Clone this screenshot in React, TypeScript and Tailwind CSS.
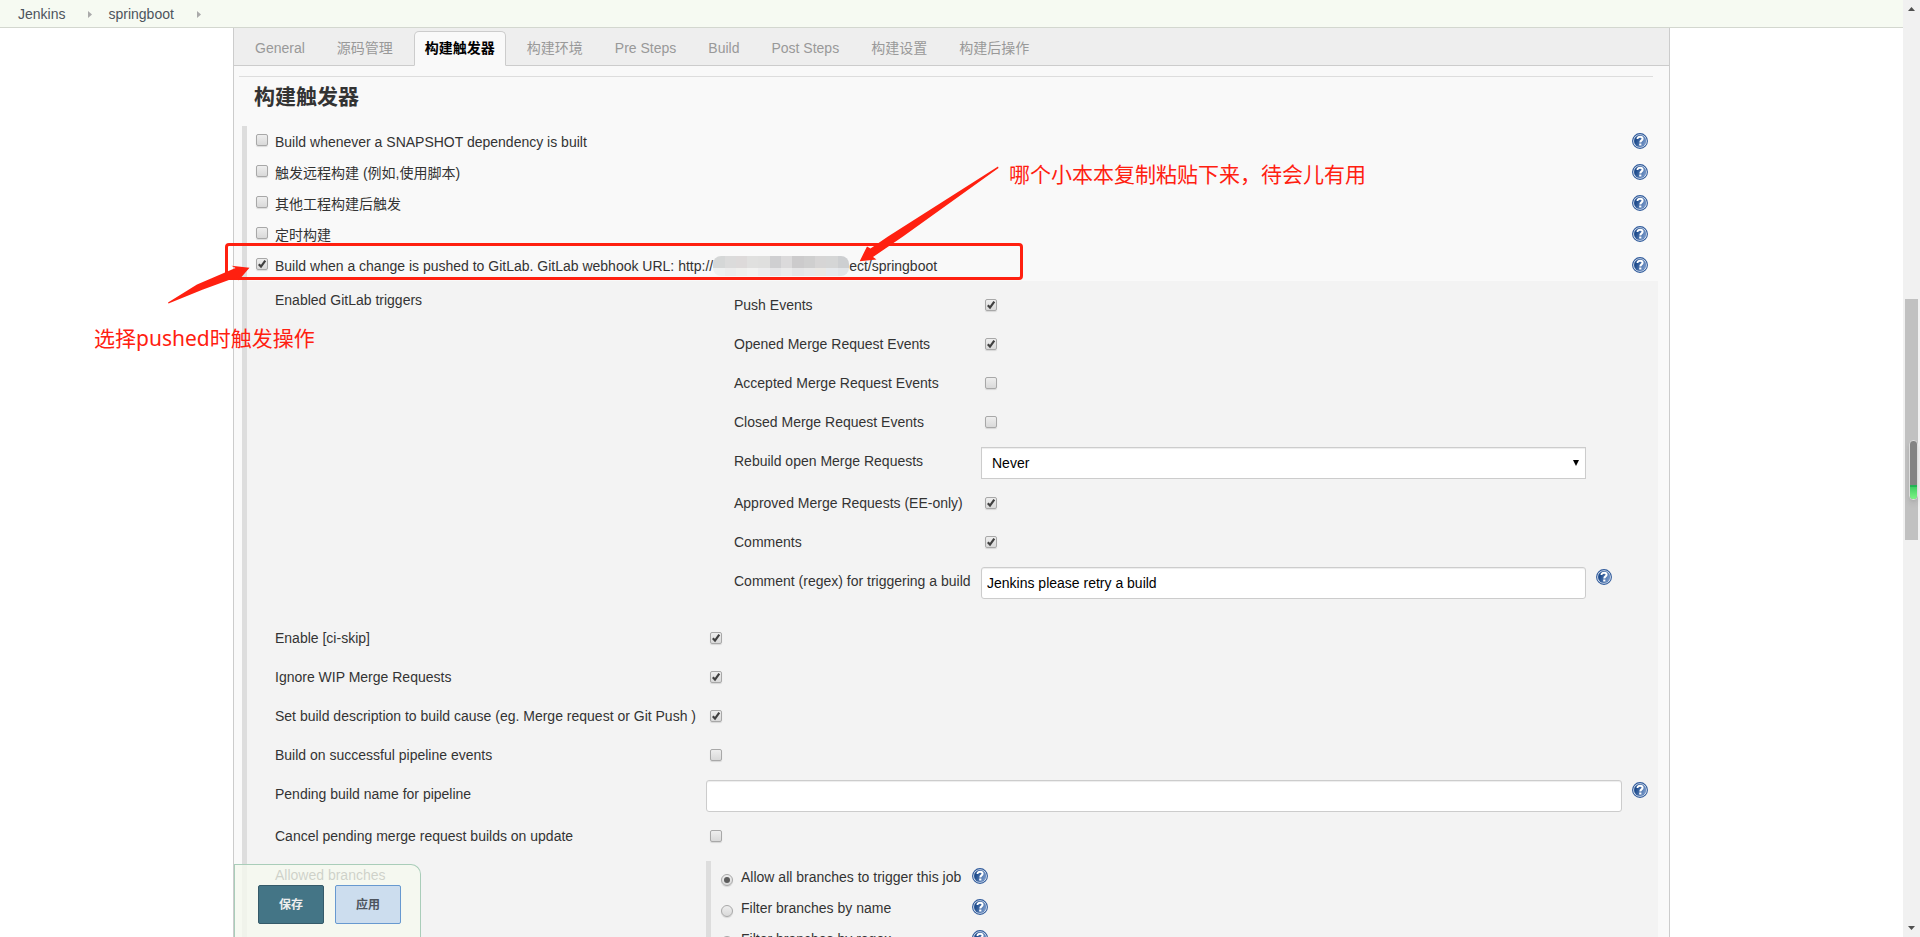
import { useId } from 'react';
import type { ReactNode } from 'react';

const tabs = ['General', '源码管理', '构建触发器', '构建环境', 'Pre Steps', 'Build', 'Post Steps', '构建设置', '构建后操作'];

const triggers = ['Build whenever a SNAPSHOT dependency is built', '触发远程构建 (例如,使用脚本)', '其他工程构建后触发', '定时构建'];

// Colours of the masked host name, top and bottom strip
const maskTop = ['#d5d7d7', '#dbdbdb', '#dddada', '#e0e0df', '#dfdfde', '#cfcfd1', '#dbdadb', '#cccbcc', '#cfcfcf', '#d6d5d5', '#d5d6d6', '#cdcfd1'];
const maskBottom = ['#eef0f0', '#ececec', '#efefed', '#f2f2f1', '#ededee', '#e6e6e8', '#ebebeb', '#e5e5e6', '#e8e8e8', '#eae8e4', '#e6e9ec', '#e2e5e8'];

function HelpIcon({ className = '' }: { className?: string }) {
  return (
    <a href="#help" aria-label="Help" className={`block size-4 shrink-0 ${className}`}>
      <svg viewBox="0 0 16 16" className="size-4">
        <defs>
          <linearGradient id="help-fill" x1="0" y1="0.3" x2="1" y2="0.7">
            <stop offset="0.2" stopColor="#204d8d" />
            <stop offset="1" stopColor="#7f9fcf" />
          </linearGradient>
        </defs>
        <circle cx="8" cy="8" r="7.400" fill="#fff" stroke="#2f5a9b" strokeWidth="1.100" />
        <circle cx="8" cy="8" r="6" fill="url(#help-fill)" stroke="#3d67a6" strokeWidth="0.400" />
        <path d="M5.500 6C5.500 4.300 6.600 3.800 8.100 3.800s2.500.7 2.500 2c0 1.700-2.300 1.500-2.300 3.700" fill="none" stroke="#fff" strokeWidth="2" />
        <rect x="7.200" y="10.500" width="2.200" height="2" fill="#fff" />
      </svg>
    </a>
  );
}

function Checkbox({ id, checked = false }: { id: string; checked?: boolean }) {
  return (
    <span className="relative block size-3 shrink-0">
      <input
        id={id}
        type="checkbox"
        defaultChecked={checked}
        className="peer block size-3 appearance-none rounded-xs border border-[#a8a8a8] bg-linear-to-b from-[#eeeeee] to-[#d9d9d9] shadow-[0_1px_1px_rgba(0,0,0,0.12)]"
      />
      <svg viewBox="0 0 12 12" className="pointer-events-none absolute inset-0 hidden size-3 peer-checked:block">
        <path d="M2.8 6.3l2.2 2.3 4.3-6" fill="none" stroke="#404040" strokeWidth="2.2" />
      </svg>
    </span>
  );
}

function Radio({ id, checked = false }: { id: string; checked?: boolean }) {
  return (
    <span className="relative block size-3 shrink-0">
      <input
        id={id}
        type="radio"
        name="branches"
        defaultChecked={checked}
        className="peer block size-3 appearance-none rounded-full border border-[#a8a8a8] bg-linear-to-b from-[#eeeeee] to-[#d9d9d9] shadow-[0_1px_1px_rgba(0,0,0,0.12)]"
      />
      <span className="pointer-events-none absolute inset-[3px] hidden rounded-full bg-[#5c5c5c] peer-checked:block" />
    </span>
  );
}

function TriggerRow({ children, checked }: { children: ReactNode; checked?: boolean }) {
  const id = useId();
  return (
    <div className="flex h-[31px] pr-[10px] pl-[9px]">
      <div className="pt-2">
        <Checkbox id={id} checked={checked} />
      </div>
      <label htmlFor={id} className="ml-[7px] flex-1 pt-[6px]">
        {children}
      </label>
      <HelpIcon className="mt-[7px]" />
    </div>
  );
}

type FieldProps = { label: string; nested?: boolean; help?: boolean; checked?: boolean; children?: (id: string) => ReactNode };

function Field({ label, nested, help, checked, children }: FieldProps) {
  const id = useId();
  return (
    <div className="flex">
      <label htmlFor={id} className={`shrink-0 pt-[9px] pl-7 ${nested ? 'w-[275px]' : 'w-[459px]'}`}>
        {label}
      </label>
      <div className="min-w-0 flex-1">
        {children ? (
          <div className="py-[5px]">{children(id)}</div>
        ) : (
          <div className="h-[39px] pt-[13px] pl-1">
            <Checkbox id={id} checked={checked} />
          </div>
        )}
      </div>
      <div className="w-9 shrink-0 pt-[7px] pl-[10px]">{help && <HelpIcon />}</div>
    </div>
  );
}

function BranchOption({ label, checked }: { label: string; checked?: boolean }) {
  const id = useId();
  return (
    <div className="flex h-[31px] pl-[10px]">
      <div className="pt-[13px]">
        <Radio id={id} checked={checked} />
      </div>
      <label htmlFor={id} className="ml-2 w-[221px] pt-[6px]">
        {label}
      </label>
      <HelpIcon className="mt-[7px] ml-[10px]" />
    </div>
  );
}

function MaskedHost() {
  return (
    <span className="inline-block h-5 w-[136px] overflow-hidden rounded-lg align-top">
      <span className="flex h-3">
        {maskTop.map((color, i) => (
          <span key={i} className="flex-1" style={{ backgroundColor: color }} />
        ))}
      </span>
      <span className="flex h-2">
        {maskBottom.map((color, i) => (
          <span key={i} className="flex-1" style={{ backgroundColor: color }} />
        ))}
      </span>
    </span>
  );
}

function Annotations() {
  return (
    <div className="pointer-events-none absolute top-0 left-0 font-['Noto_Sans','Noto_Sans_CJK_SC',sans-serif] text-[21px] leading-7 text-[#ff2010]">
      <div className="absolute top-[215px] -left-[9px] h-[37px] w-[798px] rounded-sm border-3 border-[#ff2010]" />
      <svg viewBox="0 0 140 96" className="absolute top-[138px] left-[625px] h-[96px] w-[140px]">
        <path d="M139 .5L29 70.500 11.500 82.500 8 80.500 .7 95.200 17.500 93.500 14 91 44 70.500 139.500 2z" fill="#ff2010" />
      </svg>
      <svg viewBox="0 0 84 40" className="absolute top-[237px] -left-[67px] h-[40px] w-[84px]">
        <path d="M1 37.500L30 19.500 68.500 3 64.500 .8 82.500 2.800 71.500 15.500 71 12.500 66 13.500 36 24.500 1.500 38.500z" fill="#ff2010" />
      </svg>
      <div className="absolute top-[132px] left-[775px] whitespace-nowrap">哪个小本本复制粘贴下来，待会儿有用</div>
      <div className="absolute top-[296px] -left-[140px] whitespace-nowrap">选择pushed时触发操作</div>
    </div>
  );
}

function Scrollbar() {
  return (
    <div className="relative flex w-[17px] shrink-0 flex-col items-center justify-between bg-[#f1f1f1] py-[7px]">
      <svg viewBox="0 0 7 4" className="h-1 w-[7px]">
        <path d="M0 4L3.500 0 7 4z" fill="#505050" />
      </svg>
      <div className="absolute top-[299px] left-[2px] h-[241px] w-[13px] bg-[#c1c1c1]" />
      <div className="absolute top-[440px] left-[6px] flex h-[60px] w-[9px] flex-col overflow-hidden rounded-sm border border-[#dcdcdc] bg-[#838383] shadow-md">
        <div className="mt-auto h-[14px] border-t-2 border-[#22b455] bg-linear-to-b from-[#3fce64] to-[#7cf585]" />
      </div>
      <svg viewBox="0 0 7 4" className="h-1 w-[7px]">
        <path d="M0 0L3.500 4 7 0z" fill="#505050" />
      </svg>
    </div>
  );
}

export default function App() {
  return (
    <div className="flex h-screen overflow-hidden bg-white font-['Liberation_Sans','Noto_Sans_CJK_SC',sans-serif] text-sm leading-5 text-[#333]">
      <div className="flex min-w-0 flex-1 flex-col">
        {/* Breadcrumbs */}
        <nav className="flex h-7 shrink-0 border-b border-[#d3d7cf] bg-[#f6faf2] pt-1 pl-[18px] text-[#4d545d]">
          <a href="#jenkins">Jenkins</a>
          <svg viewBox="0 0 4 7" className="mt-[7px] mr-4 ml-[23px] h-[7px] w-1">
            <path d="M0 0L4 3.500 0 7z" fill="#aaaaaa" />
          </svg>
          <a href="#springboot">springboot</a>
          <svg viewBox="0 0 4 7" className="mt-[7px] ml-[23px] h-[7px] w-1">
            <path d="M0 0L4 3.500 0 7z" fill="#aaaaaa" />
          </svg>
        </nav>

        <main className="relative mx-[233px] min-h-0 flex-1 border-x border-[#ccc] bg-[#f9f9f9]">
          {/* Tabs */}
          <div role="tablist" className="flex gap-[10px] border-b border-[#ccc] bg-[#eeeeee] pt-[3px] pl-[10px]">
            {tabs.map((tab) => (
              <button
                key={tab}
                type="button"
                role="tab"
                aria-selected={tab === '构建触发器'}
                className="-mb-px rounded-t-[5px] border border-transparent px-[10px] pt-[6px] pb-[7px] whitespace-nowrap text-[#999] aria-selected:border-[#ccc] aria-selected:border-b-[#f9f9f9] aria-selected:bg-[#f9f9f9] aria-selected:font-bold aria-selected:text-black"
              >
                {tab}
              </button>
            ))}
          </div>

          <h2 className="mt-[10px] mr-4 ml-[5px] h-[50px] border-t border-[#ddd] pt-[6px] pl-[15px] text-[21px] leading-7 font-bold">构建触发器</h2>

          <form className="mr-[11px] ml-2 border-l-[5px] border-[#ddd]">
            {triggers.map((trigger) => (
              <TriggerRow key={trigger}>{trigger}</TriggerRow>
            ))}
            <TriggerRow checked>
              Build when a change is pushed to GitLab. GitLab webhook URL: http://
              <MaskedHost />
              ect/springboot
            </TriggerRow>

            {/* GitLab trigger options */}
            <div className="bg-[#f3f3f3]">
              <div className="flex pb-[10px]">
                <div className="w-[459px] shrink-0 pt-[9px] pl-7">Enabled GitLab triggers</div>
                <div className="min-w-0 flex-1 py-[5px]">
                  <Field nested label="Push Events" checked />
                  <Field nested label="Opened Merge Request Events" checked />
                  <Field nested label="Accepted Merge Request Events" />
                  <Field nested label="Closed Merge Request Events" />
                  <Field nested label="Rebuild open Merge Requests">
                    {(id) => (
                      <div className="relative">
                        <select id={id} className="block h-8 w-full appearance-none border border-[#ccc] bg-white pl-[10px] text-black shadow-[inset_0_1px_1px_rgba(0,0,0,0.075)]">
                          <option>Never</option>
                        </select>
                        <svg viewBox="0 0 6 6" className="pointer-events-none absolute top-[13px] right-[7px] size-[6px]">
                          <path d="M0 0h6L3 6z" fill="#000" />
                        </svg>
                      </div>
                    )}
                  </Field>
                  <Field nested label="Approved Merge Requests (EE-only)" checked />
                  <Field nested label="Comments" checked />
                  <Field nested help label="Comment (regex) for triggering a build">
                    {(id) => (
                      <input
                        id={id}
                        defaultValue="Jenkins please retry a build"
                        className="block h-8 w-full rounded-[3px] border border-[#ccc] bg-white px-[5px] text-black shadow-[inset_0_1px_1px_rgba(0,0,0,0.075)]"
                      />
                    )}
                  </Field>
                </div>
                <div className="w-9 shrink-0" />
              </div>

              <Field label="Enable [ci-skip]" checked />
              <Field label="Ignore WIP Merge Requests" checked />
              <Field label="Set build description to build cause (eg. Merge request or Git Push )" checked />
              <Field label="Build on successful pipeline events" />
              <Field help label="Pending build name for pipeline">
                {(id) => (
                  <input id={id} className="block h-8 w-full rounded-[3px] border border-[#ccc] bg-white px-[5px] text-black shadow-[inset_0_1px_1px_rgba(0,0,0,0.075)]" />
                )}
              </Field>
              <Field label="Cancel pending merge request builds on update" />

              <div className="flex">
                <div className="w-[459px] shrink-0 pt-[9px] pl-7">Allowed branches</div>
                <div className="mt-[5px] flex-1 border-l-[5px] border-[#ddd]">
                  <BranchOption label="Allow all branches to trigger this job" checked />
                  <BranchOption label="Filter branches by name" />
                  <BranchOption label="Filter branches by regex" />
                </div>
              </div>
            </div>
          </form>

          {/* Save bar */}
          <div className="absolute bottom-0 left-0 flex h-[73px] gap-[11px] rounded-tr-[10px] border-t border-r border-l border-[#a9cdb9] bg-[#f5f9ef]/80 pt-5 pr-[19px] pl-[23px] text-xs font-bold">
            <button type="button" className="h-[39px] w-[66px] rounded-xs border border-[#355a69] bg-[#447586] text-[#eeeeee]">
              保存
            </button>
            <button type="button" className="h-[39px] w-[66px] rounded-xs border border-[#6799d0] bg-[#ccddee] text-[#4d545d]">
              应用
            </button>
          </div>

          <Annotations />
        </main>
      </div>
      <Scrollbar />
    </div>
  );
}
